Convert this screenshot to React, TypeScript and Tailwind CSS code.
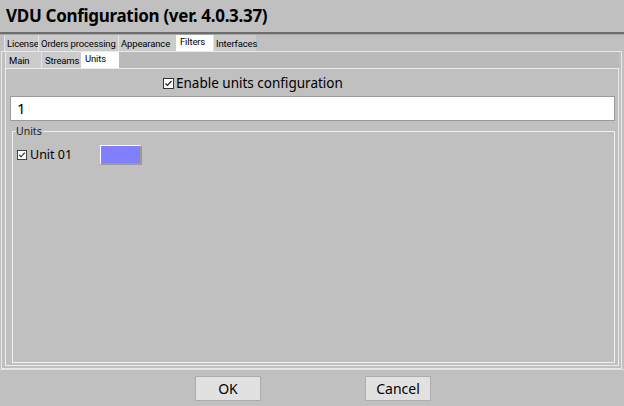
import React from "react";

const font = { fontFamily: '"Noto Sans", "Open Sans", sans-serif' };
const tabFont = { fontFamily: 'Roboto, "Noto Sans", sans-serif' };

function Check({ size = 11 }: { size?: number }) {
  return (
    <svg width={size} height={size} viewBox="0 0 11 11" className="shrink-0">
      <rect x="0.5" y="0.5" width="10" height="10" fill="#ffffff" stroke="#333333" />
      <path d="M2.5 5.5 L4.5 7.5 L8.5 3" fill="none" stroke="#222222" strokeWidth="1.2" />
    </svg>
  );
}

export default function App() {
  const topTabs = [
    { label: "License", w: 34 },
    { label: "Orders processing", w: 80 },
    { label: "Appearance", w: 58 },
    { label: "Filters", w: 37, active: true },
    { label: "Interfaces", w: 43 },
  ];
  const subTabs = [
    { label: "Main", w: 36 },
    { label: "Streams", w: 40 },
    { label: "Units", w: 38, active: true },
  ];
  return (
    <div className="w-[624px] h-[406px] bg-[#c0c0c0] flex flex-col overflow-hidden text-black" style={font}>
      <div className="h-[32px] shrink-0 flex items-center pl-[6px] text-[17px] font-bold tracking-[-0.3px]">
        VDU Configuration (ver. 4.0.3.37)
      </div>
      <div className="h-[2px] shrink-0 bg-[#6e6e6e]" />
      <div className="h-[1px] shrink-0 bg-[#a8a8a8]" />
      <div className="flex shrink-0 pl-[4px] h-[16px] text-[9.5px] tracking-[-0.15px] leading-[17px] whitespace-nowrap" style={tabFont}>
        {topTabs.map((t) => (
          <div
            key={t.label}
            style={{ width: t.w }}
            className={
              t.active
                ? "bg-white pl-[4px] leading-[13px]"
                : "bg-[#cbcbcb] border-l border-[#e4e4e4] pl-[2px]"
            }
          >
            {t.label}
          </div>
        ))}
      </div>
      <div className="ml-[1px] mr-[2px] h-[318px] shrink-0 border-l border-b border-r border-t border-[#e9e9e9] flex flex-col pl-[3px] pr-[2px] pb-[2px]">
        <div className="flex shrink-0 h-[16px] text-[9.5px] tracking-[-0.15px] leading-[17px] whitespace-nowrap" style={tabFont}>
          {subTabs.map((t) => (
            <div
              key={t.label}
              style={{ width: t.w }}
              className={
                t.active
                  ? "bg-white pl-[4px] leading-[13px]"
                  : "bg-[#cbcbcb] border-l border-[#e4e4e4] pl-[3px]"
              }
            >
              {t.label}
            </div>
          ))}
          <div className="flex-1 bg-[#bababa]" />
        </div>
        <div className="flex-1 border border-[#ececec] flex flex-col pl-[4px] pr-[3px] pb-[2px]">
          <div className="flex shrink-0 items-center pl-[153px] h-[27px] pt-[2px] gap-[2px] text-[13.5px]">
            <Check />
            <span>Enable units configuration</span>
          </div>
          <div className="h-[25px] shrink-0 bg-white border border-[#9a9a9a] flex items-center pl-[6px] text-[15px]">
            1
          </div>
          <div className="relative flex-1 mt-[10px] ml-[2px] border border-[#f0f0f0]">
            <div className="absolute -top-[7px] left-[3px] bg-[#c0c0c0] pr-[1px] text-[10.5px] leading-[12px] text-[#222]">
              Units
            </div>
            <div className="flex items-center mt-[13px] ml-[4px] h-[20px]">
              <div className="flex items-center gap-[3px] text-[12.5px] w-[83px]">
                <Check size={10} />
                <span>Unit 01</span>
              </div>
              <div className="w-[42px] h-[20px] bg-[#8080ff] border-t border-l border-[#ffffff] border-r-2 border-b-2 border-r-[#9a9a9a] border-b-[#9a9a9a]" />
            </div>
          </div>
        </div>
      </div>
      <div className="h-[1px] shrink-0 bg-[#e0e0e0]" />
      <div className="flex-1 flex items-start pt-[6px]">
        <div className="ml-[195px] w-[66px] h-[25px] bg-[#e1e1e1] border border-[#adadad] flex items-center justify-center text-[14px]">
          OK
        </div>
        <div className="ml-[104px] w-[66px] h-[25px] bg-[#e1e1e1] border border-[#adadad] flex items-center justify-center text-[14px]">
          Cancel
        </div>
      </div>
    </div>
  );
}
